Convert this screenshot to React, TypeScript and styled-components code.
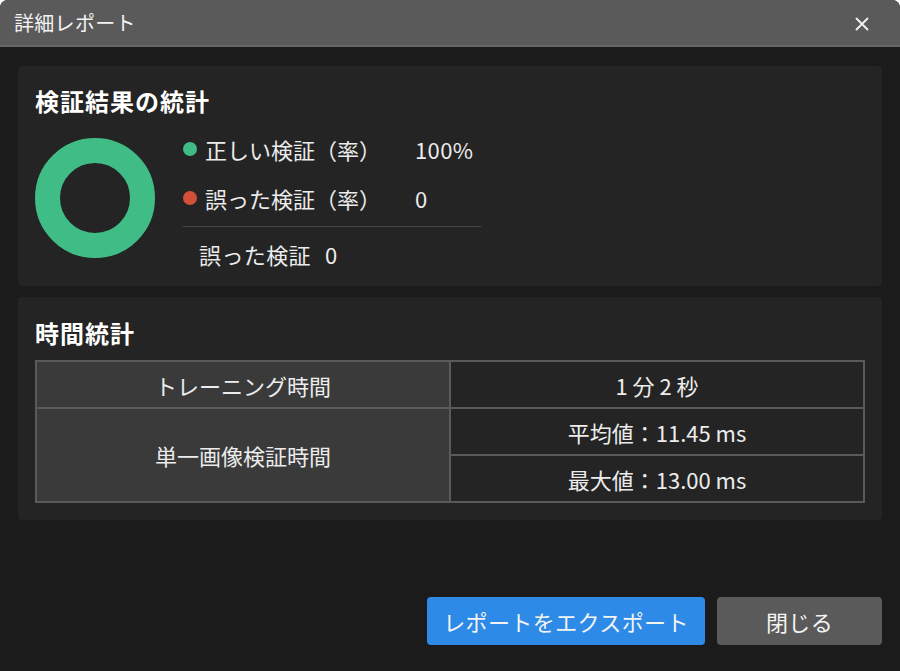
import React from 'react'
import styled, { createGlobalStyle } from 'styled-components'

const GlobalStyle = createGlobalStyle`
  html, body {
    margin: 0;
    padding: 0;
    background: #ffffff;
  }
  body {
    font-family: 'Noto Sans CJK JP', 'Noto Sans', sans-serif;
  }
`

interface LegendItem {
  label: string
  value: string
  color: string
}

const legend: LegendItem[] = [
  { label: '正しい検証（率）', value: '100%', color: '#40bd87' },
  { label: '誤った検証（率）', value: '0', color: '#d2503a' },
]

export default function App() {
  return (
    <>
      <GlobalStyle />
      <Dialog>
        <TitleBar>
          <TitleText>詳細レポート</TitleText>
          <CloseButton aria-label="閉じる">
            <svg width="14" height="14" viewBox="0 0 14 14">
              <path d="M1.5 1.5 L12.5 12.5 M12.5 1.5 L1.5 12.5" stroke="#f2f2f2" strokeWidth="1.8" strokeLinecap="round" />
            </svg>
          </CloseButton>
        </TitleBar>

        <Content>
          <Card $top={20} $bottom={18}>
            <CardTitle>検証結果の統計</CardTitle>
            <ResultRow>
              <Donut width="120" height="120" viewBox="0 0 120 120">
                <circle cx="60" cy="60" r="47.5" fill="none" stroke="#40bd87" strokeWidth="25" />
              </Donut>
              <Legend>
                {legend.map((item) => (
                  <LegendRow key={item.label}>
                    <Dot $color={item.color} />
                    <LegendLabel>{item.label}</LegendLabel>
                    <LegendValue>{item.value}</LegendValue>
                  </LegendRow>
                ))}
                <Divider />
                <CountRow>
                  誤った検証<CountValue>0</CountValue>
                </CountRow>
              </Legend>
            </ResultRow>
          </Card>

          <Card $top={21} $bottom={17}>
            <CardTitle>時間統計</CardTitle>
            <TimeTable>
              <tbody>
                <tr>
                  <HeadCell>トレーニング時間</HeadCell>
                  <ValueCell>1 分 2 秒</ValueCell>
                </tr>
                <tr>
                  <HeadCell rowSpan={2}>単一画像検証時間</HeadCell>
                  <ValueCell>平均値：11.45 ms</ValueCell>
                </tr>
                <tr>
                  <ValueCell>最大値：13.00 ms</ValueCell>
                </tr>
              </tbody>
            </TimeTable>
          </Card>
        </Content>

        <Footer>
          <Button $variant="primary">レポートをエクスポート</Button>
          <Button $variant="secondary">閉じる</Button>
        </Footer>
      </Dialog>
    </>
  )
}

const Dialog = styled.div`
  height: 100vh;
  display: flex;
  flex-direction: column;
  background: #1b1b1b;
  border-radius: 8px 8px 0 0;
  overflow: hidden;
  color: #ececec;
`

const TitleBar = styled.header`
  height: 45px;
  flex-shrink: 0;
  display: flex;
  align-items: center;
  justify-content: space-between;
  padding: 0 31px 0 14px;
  background: #5a5a5a;
  border-bottom: 2px solid #676767;
`

const TitleText = styled.h1`
  margin: 0;
  font-size: 20px;
  font-weight: 400;
  color: #f2f2f2;
  letter-spacing: 0.3px;
`

const CloseButton = styled.button`
  display: flex;
  align-items: center;
  justify-content: center;
  padding: 0;
  margin-top: 2px;
  background: none;
  border: none;
  cursor: pointer;
`

const Content = styled.main`
  display: flex;
  flex-direction: column;
  gap: 11px;
  padding: 19px 18px 0;
`

const Card = styled.section<{ $top: number; $bottom: number }>`
  background: #242424;
  border-radius: 4px;
  padding: ${p => p.$top}px 17px ${p => p.$bottom}px;
`

const CardTitle = styled.h2`
  margin: 0;
  font-size: 24px;
  line-height: 30px;
  font-weight: 700;
  color: #ffffff;
  letter-spacing: 1px;
`

const ResultRow = styled.div`
  display: flex;
  align-items: flex-start;
  gap: 28px;
  margin-top: 22px;
`

const Donut = styled.svg`
  flex-shrink: 0;
  display: block;
`

const Legend = styled.div`
  display: flex;
  flex-direction: column;
  width: 298px;
  margin-top: -3px;
`

const LegendRow = styled.div`
  display: flex;
  align-items: center;
  height: 28px;
  margin-bottom: 21px;
  font-size: 22px;

  &:nth-of-type(2) {
    margin-bottom: 14px;
  }
`

const Dot = styled.span<{ $color: string }>`
  width: 14px;
  height: 14px;
  border-radius: 50%;
  background: ${p => p.$color};
  flex-shrink: 0;
  margin-right: 8px;
`

const LegendLabel = styled.span`
  width: 210px;
  flex-shrink: 0;
`

const LegendValue = styled.span`
  letter-spacing: 0.4px;
`

const Divider = styled.div`
  height: 1px;
  background: #474747;
`

const CountRow = styled.div`
  height: 28px;
  margin-top: 13px;
  padding-left: 16px;
  font-size: 22px;
  line-height: 28px;
  letter-spacing: 0.4px;
`

const CountValue = styled.span`
  margin-left: 14px;
`

const TimeTable = styled.table`
  width: 100%;
  margin-top: 12px;
  border-collapse: collapse;
  border: 2px solid #5a5a5a;
  font-size: 22px;
  color: #ececec;
`

const HeadCell = styled.td`
  width: 50%;
  height: 45px;
  padding: 0;
  text-align: center;
  background: #3a3a3a;
  border: 2px solid #5a5a5a;
`

const ValueCell = styled.td`
  height: 45px;
  padding: 0;
  text-align: center;
  background: #242424;
  border: 2px solid #5a5a5a;
  white-space: pre;
`

const Footer = styled.footer`
  margin-top: auto;
  display: flex;
  justify-content: flex-end;
  gap: 12px;
  padding: 0 18px 26px;
`

const Button = styled.button<{ $variant: 'primary' | 'secondary' }>`
  height: 48px;
  padding: 0;
  width: ${p => (p.$variant === 'primary' ? '278px' : '165px')};
  border: none;
  border-radius: 4px;
  background: ${p => (p.$variant === 'primary' ? '#2d8ae6' : '#5a5a5a')};
  color: #f4f4f4;
  font-family: inherit;
  font-size: 22px;
  letter-spacing: 0.4px;
  cursor: pointer;
`
